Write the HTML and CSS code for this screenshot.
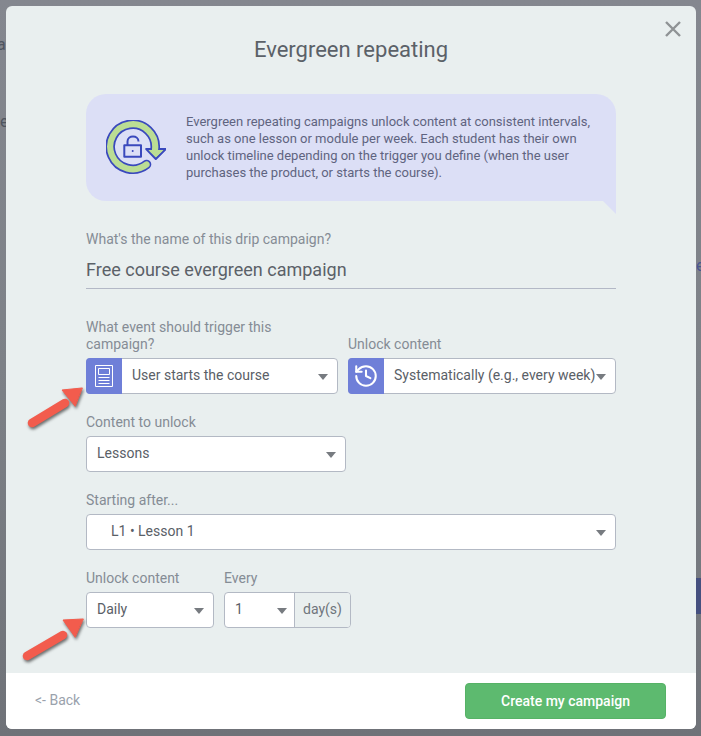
FILE: index.html
```html
<!DOCTYPE html>
<html lang="en">
<head>
<meta charset="utf-8">
<title>Evergreen repeating</title>
<link rel="stylesheet" href="styles.css">
</head>
<body>
<div class="backdrop" aria-hidden="true">
  <span class="bg-text bg-a">a</span>
  <span class="bg-text bg-e">e</span>
  <span class="bg-text bg-e2">e</span>
  <span class="bg-band"></span>
</div>
<main class="modal">
  <svg class="close" viewBox="0 0 16 16" width="16" height="16"><path d="M1 1L15 15M15 1L1 15"/></svg>
  <div class="body">
    <h1 class="title">Evergreen repeating</h1>
    <div class="callout">
      <svg class="callout-icon" viewBox="0 0 60 56" width="60" height="56">
        <path class="ring-o" d="M40.5 44.5A22.5 22.5 0 1 1 49.1 29"/>
        <path class="head" d="M40.2 29H59.8L49.8 39Z"/>
        <path class="ring-i" d="M40.5 44.5A22.5 22.5 0 1 1 49.1 29"/>
        <path class="head-fill" d="M42.5 30.2H57.3L49.8 37.2Z"/>
        <path class="lock" d="M18.3 25.3H35V36.7H18.3ZM21.5 25V21.5C21.5 14.8 32.5 14.8 32.5 21.5"/>
        <circle class="key" cx="26.7" cy="31" r="1"/>
      </svg>
      <p class="callout-text">Evergreen repeating campaigns unlock content at consistent intervals, such as one lesson or module per week. Each student has their own unlock timeline depending on the trigger you define (when the user purchases the product, or starts the course).</p>
    </div>

    <div class="field name-field">
      <label class="label">What's the name of this drip campaign?</label>
      <div class="name-input">Free course evergreen campaign</div>
    </div>

    <div class="row row-trigger">
      <div class="field col-trigger">
        <label class="label">What event should trigger this campaign?</label>
        <div class="select">
          <span class="tab">
            <svg viewBox="0 0 18 22" width="18" height="22"><path d="M.5.5H17.5V21.5H.5ZM3.5 3.5H14.5V9.5H3.5ZM3.5 12.5H14.5M3.5 15.5H14.5M3.5 18.5H14.5"/></svg>
          </span>
          <span class="value">User starts the course</span>
          <span class="caret"></span>
        </div>
      </div>
      <div class="field col-unlock">
        <label class="label">Unlock content</label>
        <div class="select select-tight">
          <span class="tab">
            <svg class="history" viewBox="0 0 24 24" width="26" height="26"><path d="M3 12a9 9 0 1 0 9-9 9.75 9.75 0 0 0-6.74 2.74L3 8"/><path d="M3 3v5h5"/><path d="M12 7v5l4 2"/></svg>
          </span>
          <span class="value">Systematically (e.g., every week)</span>
          <span class="caret"></span>
        </div>
      </div>
    </div>

    <div class="field field-content">
      <label class="label">Content to unlock</label>
      <div class="select"><span class="value">Lessons</span><span class="caret"></span></div>
    </div>

    <div class="field">
      <label class="label">Starting after...</label>
      <div class="select select-indent"><span class="value">L1 • Lesson 1</span><span class="caret"></span></div>
    </div>

    <div class="row row-last">
      <div class="field col-daily">
        <label class="label">Unlock content</label>
        <div class="select"><span class="value">Daily</span><span class="caret"></span></div>
      </div>
      <div class="field col-every">
        <label class="label">Every</label>
        <div class="select select-group">
          <span class="value">1</span><span class="caret"></span>
          <span class="addon">day(s)</span>
        </div>
      </div>
    </div>
  </div>
  <footer class="footer">
    <a class="back">&lt;- Back</a>
    <button class="create">Create my campaign</button>
  </footer>
</main>
<svg class="arrow arrow-one" viewBox="0 0 70 60" width="70" height="60"><path d="M6 44L39 24"/><path class="arrow-head" d="M56 9L36 11L49 27Z"/></svg>
<svg class="arrow arrow-two" viewBox="0 0 70 60" width="70" height="60"><path d="M7 47L43 26"/><path class="arrow-head" d="M63 10L43 11L55 28Z"/></svg>
</body>
</html>
```

FILE: styles.css
```css
* { box-sizing: border-box; }
html, body { margin: 0; height: 100%; }
body {
  width: 701px;
  height: 736px;
  overflow: hidden;
  position: relative;
  padding: 6px 5px 7px 6px;
  background: linear-gradient(#84878f, #7d8187 50%, #6f7278);
  font-family: Roboto, "Liberation Sans", sans-serif;
  color: #5a6067;
}
.backdrop { position: absolute; inset: 0; }
.bg-text { position: absolute; font-size: 16px; color: #4f5560; line-height: 18px; }
.bg-a { left: -3px; top: 36px; }
.bg-e { left: 0; top: 113px; }
.bg-e2 { left: 696px; top: 257px; color: #4a5590; }
.bg-band { position: absolute; left: 696px; top: 578px; width: 5px; height: 36px; background: #45507f; }

.modal {
  position: relative;
  width: 690px;
  height: 723px;
  background: #e9efef;
  border-radius: 6px;
  display: flex;
  flex-direction: column;
  overflow: hidden;
}
.close { position: absolute; top: 15px; right: 15px; }
.close path { stroke: #8f9395; stroke-width: 2.4; fill: none; }
.body { flex: 1; padding: 0 80px; }
.title {
  margin: 0;
  padding-top: 31px;
  height: 88px;
  font-size: 22px;
  line-height: 26px;
  font-weight: 400;
  text-align: center;
  color: #5b6168;
}
.callout {
  position: relative;
  height: 107px;
  display: flex;
  align-items: center;
  padding: 0 20px 2px;
  gap: 20px;
  background: #dcdff6;
  border-radius: 20px 20px 0 20px;
  margin-bottom: 30px;
}
.callout::after {
  content: "";
  position: absolute;
  right: 0;
  top: 100%;
  width: 13px;
  height: 13px;
  background: #dcdff6;
  clip-path: polygon(0 0, 100% 0, 100% 100%);
}
.callout-icon { flex: none; margin-top: 2px; }
.ring-o { fill: none; stroke: #3a49bd; stroke-width: 9.6; stroke-linecap: round; }
.ring-i { fill: none; stroke: #bbdd94; stroke-width: 6.2; stroke-linecap: round; }
.head { fill: #bbdd94; stroke: #3a49bd; stroke-width: 2; stroke-linejoin: round; }
.head-fill { fill: #bbdd94; }
.lock { fill: none; stroke: #3a49bd; stroke-width: 2; stroke-linejoin: round; }
.key { fill: #3a49bd; }
.callout-text {
  margin: 0;
  font-size: 13px;
  line-height: 17px;
  color: #5f6480;
}
.field { display: flex; flex-direction: column; margin-bottom: 20px; }
.label {
  font-size: 14px;
  line-height: 17px;
  color: #858c95;
  margin-bottom: 5px;
}
.name-field { margin-bottom: 30px; }
.name-field .label { margin-bottom: 3px; }
.name-input {
  height: 38px;
  padding-top: 8px;
  font-size: 18px;
  line-height: 22px;
  color: #5b6168;
  border-bottom: 1px solid #b3b8c6;
}
.row { display: flex; align-items: flex-end; gap: 10px; }
.col-trigger { width: 252px; }
.col-unlock { width: 268px; }
.col-daily { width: 128px; margin-bottom: 0; }
.col-every { width: 127px; margin-bottom: 0; }
.field-content { width: 260px; }
.select {
  height: 36px;
  display: flex;
  align-items: center;
  position: relative;
  background: #fff;
  border: 1px solid #b3b9c4;
  border-radius: 4px;
  padding: 0 9px 2px 10px;
  font-size: 14px;
}
.value { flex: 1; white-space: nowrap; }
.caret {
  flex: none;
  width: 0;
  height: 0;
  margin-top: 4px;
  border-left: 5.5px solid transparent;
  border-right: 5.5px solid transparent;
  border-top: 6px solid #777b80;
}
.tab {
  flex: none;
  width: 36px;
  height: 36px;
  margin: 1px 10px -1px -11px;
  border-radius: 4px 0 0 4px;
  background: #6f7fd8;
  display: flex;
  align-items: center;
  justify-content: center;
}
.tab path { fill: none; stroke: #fff; stroke-width: 1; }
.tab .history path { stroke-width: 1.9; stroke-linecap: round; stroke-linejoin: round; }
.select-indent { padding-left: 24px; }
.select-group { padding-right: 0; }
.select-group .caret { margin-right: 7px; }
.addon {
  flex: none;
  width: 56px;
  height: 34px;
  margin-bottom: -2px;
  line-height: 32px;
  text-align: center;
  background: #e9efef;
  border-left: 1px solid #b3b9c4;
  border-radius: 0 3px 3px 0;
  color: #6f757c;
}
.footer {
  height: 56px;
  flex: none;
  background: #fff;
  display: flex;
  align-items: center;
  justify-content: space-between;
  padding: 0 30px 0 29px;
}
.back { font-size: 14px; color: #9aa2ac; margin-top: -2px; }
.create {
  width: 201px;
  height: 36px;
  border: 1px solid #56b266;
  border-radius: 4px;
  background: #5dba6f;
  color: #fff;
  font-family: inherit;
  font-size: 14px;
  font-weight: 500;
}
.arrow { position: absolute; filter: drop-shadow(1px 2px 1.5px rgba(0,0,0,.55)); }
.arrow path { fill: none; stroke: #f25c4d; stroke-width: 8.5; stroke-linecap: round; }
.arrow .arrow-head { fill: #f25c4d; stroke-width: 1; stroke-linejoin: round; }
.arrow-one { left: 26px; top: 379px; }
.arrow-two { left: 20px; top: 609px; }
```
